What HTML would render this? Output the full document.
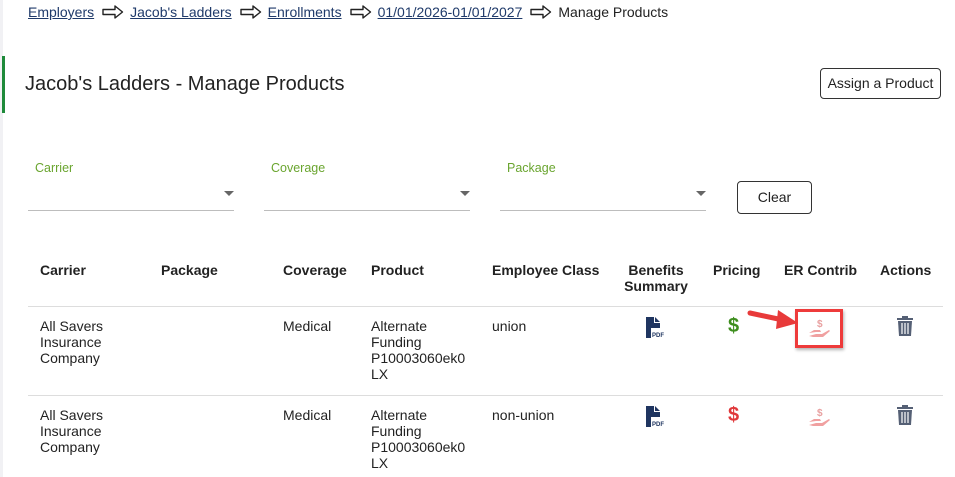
<!DOCTYPE html>
<html><head><style>
body{margin:0;width:955px;height:477px;overflow:hidden;background:#fff;font-family:"Liberation Sans",sans-serif;color:#222;position:relative}
.a{position:absolute}
.bc{top:4px;left:28px;font-size:14px;color:#222;white-space:nowrap}
.bc a{color:#1f3a6a;text-decoration:underline}
.arr{display:inline-block;margin:0 6px 0 8px;vertical-align:-2px}
.t{font-size:14px;color:#222;line-height:16px}
.h{font-size:14px;font-weight:bold;color:#222}
.lbl{font-size:12.5px;color:#6aa52f}
.line{height:1px;background:#bdbdbd}
.tri{width:0;height:0;border-left:5px solid transparent;border-right:5px solid transparent;border-top:5px solid #666}
</style></head><body>
<div class="a" style="left:0;top:0;width:3px;height:477px;background:#f1f1f4"></div>
<div class="a bc"><a>Employers</a><svg class="arr" width="22" height="14" viewBox="0 0 22 14"><path d="M1 4.5h12V1l7.5 6-7.5 6V9.5H1z" fill="none" stroke="#222" stroke-width="1.4" stroke-linejoin="round"/></svg><a>Jacob's Ladders</a><svg class="arr" width="22" height="14" viewBox="0 0 22 14"><path d="M1 4.5h12V1l7.5 6-7.5 6V9.5H1z" fill="none" stroke="#222" stroke-width="1.4" stroke-linejoin="round"/></svg><a>Enrollments</a><svg class="arr" width="22" height="14" viewBox="0 0 22 14"><path d="M1 4.5h12V1l7.5 6-7.5 6V9.5H1z" fill="none" stroke="#222" stroke-width="1.4" stroke-linejoin="round"/></svg><a>01/01/2026-01/01/2027</a><svg class="arr" width="22" height="14" viewBox="0 0 22 14"><path d="M1 4.5h12V1l7.5 6-7.5 6V9.5H1z" fill="none" stroke="#222" stroke-width="1.4" stroke-linejoin="round"/></svg>Manage Products</div>
<div class="a" style="left:2px;top:56px;width:3px;height:57px;background:#1e8a3a"></div>
<div class="a" style="left:25px;top:73px;font-size:20px;color:#222">Jacob's Ladders - Manage Products</div>
<div class="a" style="left:820px;top:68px;width:121px;height:31px;border:1px solid #333;border-radius:4px;box-sizing:border-box;font-size:14px;text-align:center;line-height:29px">Assign a Product</div>

<div class="a lbl" style="left:35px;top:161px">Carrier</div>
<div class="a tri" style="left:224px;top:191px"></div>
<div class="a line" style="left:28px;top:210px;width:206px"></div>
<div class="a lbl" style="left:271px;top:161px">Coverage</div>
<div class="a tri" style="left:460px;top:191px"></div>
<div class="a line" style="left:264px;top:210px;width:206px"></div>
<div class="a lbl" style="left:507px;top:161px">Package</div>
<div class="a tri" style="left:696px;top:191px"></div>
<div class="a line" style="left:500px;top:210px;width:206px"></div>
<div class="a" style="left:737px;top:181px;width:75px;height:33px;border:1px solid #333;border-radius:4px;box-sizing:border-box;font-size:14px;text-align:center;line-height:31px">Clear</div>

<div class="a h" style="left:40px;top:262px">Carrier</div>
<div class="a h" style="left:161px;top:262px">Package</div>
<div class="a h" style="left:283px;top:262px">Coverage</div>
<div class="a h" style="left:371px;top:262px">Product</div>
<div class="a h" style="left:492px;top:262px">Employee Class</div>
<div class="a h" style="left:620px;top:262px;width:72px;text-align:center;line-height:16px">Benefits Summary</div>
<div class="a h" style="left:713px;top:262px">Pricing</div>
<div class="a h" style="left:784px;top:262px">ER Contrib</div>
<div class="a h" style="left:880px;top:262px">Actions</div>
<div class="a line" style="left:28px;top:306px;width:915px;background:#ddd"></div>

<div class="a t" style="left:40px;top:318px">All Savers<br>Insurance<br>Company</div>
<div class="a t" style="left:283px;top:318px">Medical</div>
<div class="a t" style="left:371px;top:318px">Alternate<br>Funding<br>P10003060ek0<br>LX</div>
<div class="a t" style="left:492px;top:318px">union</div>
<div class="a line" style="left:28px;top:395px;width:915px;background:#ddd"></div>
<div class="a t" style="left:40px;top:407px">All Savers<br>Insurance<br>Company</div>
<div class="a t" style="left:283px;top:407px">Medical</div>
<div class="a t" style="left:371px;top:407px">Alternate<br>Funding<br>P10003060ek0<br>LX</div>
<div class="a t" style="left:492px;top:407px">non-union</div>

<svg class="a" style="left:645px;top:317px" width="20" height="22" viewBox="0 0 20 22"><path d="M1 0h8v6h6v5H6v10H1z M10 0l5 5h-5z" fill="#1f3560"/><text x="7" y="20" font-size="6" font-family="Liberation Sans" font-weight="bold" fill="#1f3560">PDF</text></svg>
<div class="a" style="left:728px;top:315px;font-size:20px;font-weight:bold;color:#3e8e1e">$</div>
<svg class="a" style="left:895px;top:316px" width="20" height="21" viewBox="0 0 20 21"><rect x="2" y="2" width="16" height="2" fill="#556075"/><rect x="7" y="0" width="6" height="2" fill="#556075"/><path d="M3 5h14l-1 15H4z" fill="#556075"/><path d="M7 7v11M10 7v11M13 7v11" stroke="#fff" stroke-width="1.2"/></svg>
<svg class="a" style="left:807px;top:318px" width="26" height="22" viewBox="0 0 26 22"><text x="10" y="9" font-size="10" font-family="Liberation Sans" font-weight="bold" fill="#e8a0a0">$</text><path d="M2 15l5-3h6l1 2h-5M9 16h6l7-4 1 1-7 6H6l-4-1z" fill="#f0a0a0"/></svg>
<div class="a" style="left:795px;top:309px;width:48px;height:39px;border:3px solid #ee3b3b;box-sizing:border-box;box-shadow:1px 2px 3px rgba(0,0,0,.3)"></div>
<svg class="a" style="left:745px;top:308px" width="60" height="24" viewBox="0 0 60 24"><path d="M5 5L38 12" stroke="#e83a3a" stroke-width="5" stroke-linecap="round"/><path d="M33 2L53 15 31 21z" fill="#e83a3a"/></svg>
<svg class="a" style="left:645px;top:406px" width="20" height="22" viewBox="0 0 20 22"><path d="M1 0h8v6h6v5H6v10H1z M10 0l5 5h-5z" fill="#1f3560"/><text x="7" y="20" font-size="6" font-family="Liberation Sans" font-weight="bold" fill="#1f3560">PDF</text></svg>
<div class="a" style="left:728px;top:404px;font-size:20px;font-weight:bold;color:#e0383a">$</div>
<svg class="a" style="left:895px;top:405px" width="20" height="21" viewBox="0 0 20 21"><rect x="2" y="2" width="16" height="2" fill="#556075"/><rect x="7" y="0" width="6" height="2" fill="#556075"/><path d="M3 5h14l-1 15H4z" fill="#556075"/><path d="M7 7v11M10 7v11M13 7v11" stroke="#fff" stroke-width="1.2"/></svg>
<svg class="a" style="left:807px;top:407px" width="26" height="22" viewBox="0 0 26 22"><text x="10" y="9" font-size="10" font-family="Liberation Sans" font-weight="bold" fill="#e8a0a0">$</text><path d="M2 15l5-3h6l1 2h-5M9 16h6l7-4 1 1-7 6H6l-4-1z" fill="#f0a0a0"/></svg>
</body></html>
